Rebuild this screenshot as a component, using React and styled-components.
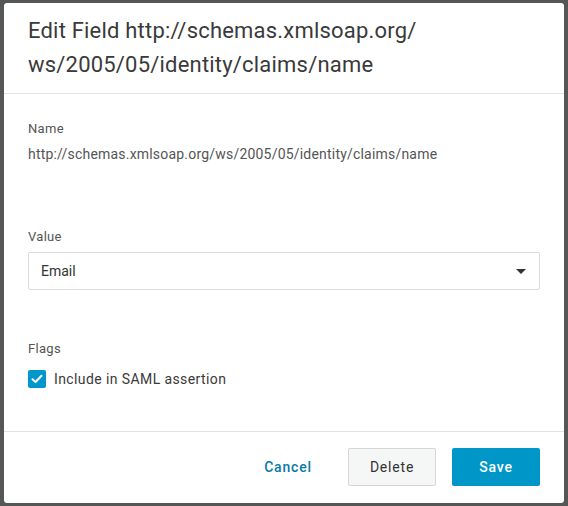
import React from "react";
import styled, { createGlobalStyle } from "styled-components";

const GlobalStyle = createGlobalStyle`
  html, body {
    margin: 0;
    padding: 0;
    background: #555656;
  }
  body {
    font-family: Roboto, "Liberation Sans", sans-serif;
    -webkit-font-smoothing: antialiased;
  }
`;

const App = () => {
  return (
    <>
      <GlobalStyle />
      <Backdrop>
        <Dialog>
          <Header>
            <Title>Edit Field http://schemas.xmlsoap.org/ ws/2005/05/identity/claims/name</Title>
          </Header>
          <Body>
            <Field gap={63}>
              <Label>Name</Label>
              <StaticValue>http://schemas.xmlsoap.org/ws/2005/05/identity/claims/name</StaticValue>
            </Field>
            <Field gap={49}>
              <Label>Value</Label>
              <Select>
                <span>Email</span>
                <Caret />
              </Select>
            </Field>
            <Field gap={0}>
              <Label>Flags</Label>
              <CheckRow>
                <CheckBox>
                  <svg width="12" height="10" viewBox="0 0 12 10">
                    <path
                      d="M1.5 5.2 L4.5 8 L10.5 1.8"
                      fill="none"
                      stroke="#fff"
                      strokeWidth="2"
                      strokeLinecap="round"
                      strokeLinejoin="round"
                    />
                  </svg>
                </CheckBox>
                <CheckLabel>Include in SAML assertion</CheckLabel>
              </CheckRow>
            </Field>
          </Body>
          <Footer>
            <Button variant="link">Cancel</Button>
            <Button variant="secondary">Delete</Button>
            <Button variant="primary">Save</Button>
          </Footer>
        </Dialog>
      </Backdrop>
    </>
  );
};

export default App;

const Backdrop = styled.div`
  width: 568px;
  height: 506px;
  padding: 3px 4px;
  box-sizing: border-box;
`;

const Dialog = styled.div`
  width: 560px;
  height: 500px;
  background: #fff;
  border-radius: 3px;
  display: flex;
  flex-direction: column;
`;

const Header = styled.div`
  padding: 11px 24px 11px;
  border-bottom: 1px solid #e3e3e3;
`;

const Title = styled.h1`
  margin: 0;
  font-size: 22px;
  line-height: 34px;
  font-weight: 400;
  letter-spacing: 0.2px;
  color: #3a3a3a;
  width: 430px;
`;

const Body = styled.div`
  flex: 1;
  padding: 25px 24px 0;
`;

const Field = styled.div`
  display: flex;
  flex-direction: column;
  margin-bottom: ${(p) => p.gap}px;
`;

const Label = styled.div`
  font-size: 13px;
  line-height: 20px;
  letter-spacing: 0.3px;
  color: #555;
`;

const StaticValue = styled.div`
  margin-top: 5px;
  font-size: 14px;
  line-height: 20px;
  letter-spacing: 0.2px;
  color: #555;
`;

const Select = styled.div`
  margin-top: 5px;
  height: 38px;
  box-sizing: border-box;
  border: 1px solid #dcdcdc;
  border-radius: 2px;
  padding: 0 12px;
  display: flex;
  align-items: center;
  justify-content: space-between;
  font-size: 14px;
  color: #333;
`;

const Caret = styled.span`
  width: 0;
  height: 0;
  border-left: 5px solid transparent;
  border-right: 5px solid transparent;
  border-top: 5px solid #333;
  margin-right: 1px;
`;

const CheckRow = styled.div`
  margin-top: 8px;
  display: flex;
  align-items: center;
  height: 24px;
`;

const CheckBox = styled.span`
  width: 18px;
  height: 18px;
  border-radius: 2px;
  background: #0098cc;
  display: flex;
  align-items: center;
  justify-content: center;
  margin-right: 8px;
`;

const CheckLabel = styled.span`
  font-size: 14px;
  letter-spacing: 0.4px;
  color: #3a3a3a;
`;

const Footer = styled.div`
  border-top: 1px solid #e3e3e3;
  padding: 16px 24px 17px;
  display: flex;
  justify-content: flex-end;
  gap: 16px;
`;

const Button = styled.button`
  width: 88px;
  height: 38px;
  box-sizing: border-box;
  border-radius: 2px;
  font-family: Roboto, "Liberation Sans", sans-serif;
  font-size: 14px;
  font-weight: ${(p) => (p.variant === "secondary" ? 400 : 500)};
  letter-spacing: 0.8px;
  cursor: pointer;
  border: 1px solid
    ${(p) => (p.variant === "secondary" ? "#d6d6d6" : "transparent")};
  background: ${(p) =>
    p.variant === "primary"
      ? "#0096c8"
      : p.variant === "secondary"
      ? "#f5f6f6"
      : "transparent"};
  color: ${(p) =>
    p.variant === "primary"
      ? "#fff"
      : p.variant === "secondary"
      ? "#333"
      : "#0a7aa6"};
`;
